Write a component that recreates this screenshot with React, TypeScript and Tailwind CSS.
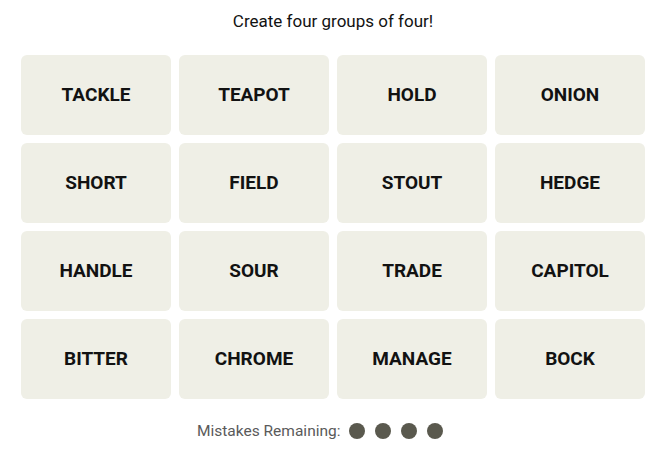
const words = [
  'TACKLE', 'TEAPOT', 'HOLD', 'ONION',
  'SHORT', 'FIELD', 'STOUT', 'HEDGE',
  'HANDLE', 'SOUR', 'TRADE', 'CAPITOL',
  'BITTER', 'CHROME', 'MANAGE', 'BOCK',
];

export default function App() {
  return (
    <div className="w-[659px] h-[453px] bg-white font-['Roboto',sans-serif] text-black">
      <div className="w-[624px] ml-[21px] pt-[10px]">
        <p className="text-center text-[17px] leading-[22px] text-[#121212]">Create four groups of four!</p>
        <div className="grid grid-cols-4 gap-[8px] mt-[23px]">
          {words.map((w) => (
            <button
              key={w}
              className="h-[80px] rounded-[6px] bg-[#efefe6] flex items-center justify-center text-[19px] font-bold text-[#121212]"
            >
              {w}
            </button>
          ))}
        </div>
        <div className="flex items-center mt-[21px] ml-[176px]">
          <span className="text-[15.5px] text-[#5a5a5a]">Mistakes Remaining:</span>
          <div className="flex gap-[10px] ml-[9px] -mt-[1px]">
            {[0, 1, 2, 3].map((i) => (
              <span key={i} className="w-[16px] h-[16px] rounded-full bg-[#5a594e]" />
            ))}
          </div>
        </div>
      </div>
    </div>
  );
}
